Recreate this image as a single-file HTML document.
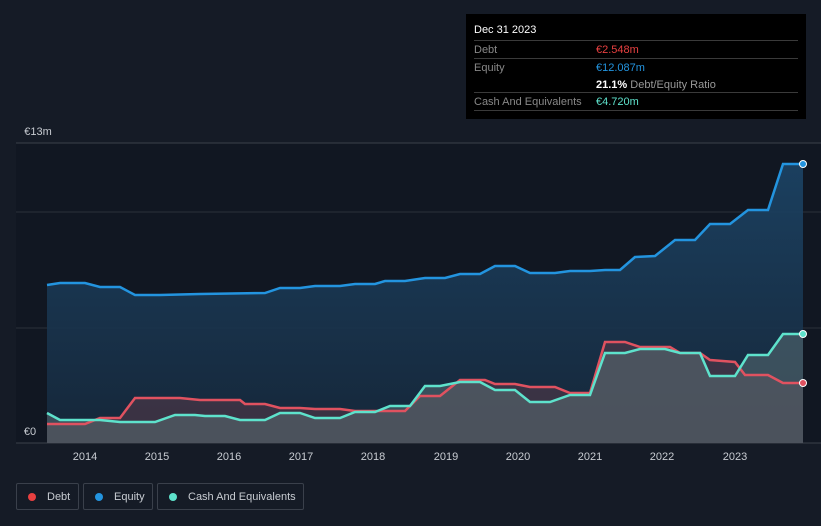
<!DOCTYPE html><html><head><style>
body{margin:0;width:821px;height:526px;background:#151b26;font-family:"Liberation Sans",sans-serif;overflow:hidden;position:relative}
.tt{position:absolute;left:466px;top:14px;width:340px;height:105px;background:#000;color:#fff;font-size:11px}
.row{position:absolute;left:8px;width:324px;border-top:1px solid #3a3a3a;height:18px;line-height:18px}
.lab{color:#888}.v{position:absolute;left:122px}
.leg{position:absolute;top:483px;height:27px;border:1px solid #3a404b;border-radius:2px;color:#c8ccd2;font-size:11px;line-height:27px;box-sizing:border-box}
.dot{display:inline-block;width:8px;height:8px;border-radius:50%;margin:0 11px 0 11px;vertical-align:-1px}
</style></head><body>
<svg width="821" height="526" style="position:absolute;left:0;top:0">
<defs><linearGradient id="g" x1="0" y1="0" x2="0" y2="1"><stop offset="0" stop-color="#1c4466" stop-opacity=".9"/><stop offset="1" stop-color="#16283b" stop-opacity=".9"/></linearGradient></defs>
<rect x="16" y="143" width="805" height="300" fill="#111722"/>
<line x1="16" y1="143" x2="821" y2="143" stroke="#3a404a"/>
<line x1="16" y1="212" x2="821" y2="212" stroke="#2a303a"/>
<line x1="16" y1="328" x2="821" y2="328" stroke="#2a303a"/>
<line x1="16" y1="443" x2="821" y2="443" stroke="#3a404a"/>
<path d="M47,285 L60,283 85,283 100,287 120,287 135,295 160,295 200,294 265,293 280,288 300,288 315,286 340,286 355,284 375,284 385,281 405,281 425,278 445,278 460,274 480,274 495,266 515,266 530,273 555,273 570,271 590,271 605,270 620,270 635,257 655,256 675,240 695,240 710,224 730,224 748,210 768,210 783,164 803,164 L803,443 L47,443Z" fill="url(#g)"/>
<path d="M47,424 L85,424 100,418 120,418 135,398 180,398 200,400 240,400 245,404 265,404 280,408 300,408 315,409 340,409 355,411 405,411 420,396 440,396 460,380 485,380 495,384 515,384 530,387 555,387 570,393 590,393 605,342 625,342 640,347 670,347 680,353 700,353 710,360 735,362 745,375 768,375 783,383 803,383 L803,443 L47,443Z" fill="#5a3a48" fill-opacity=".55"/>
<path d="M47,413 L60,420 100,420 120,422 155,422 175,415 195,415 205,416 225,416 240,420 265,420 280,413 300,413 315,418 340,418 355,412 375,412 390,406 410,406 425,386 440,386 460,382 480,382 495,390 515,390 530,402 550,402 570,395 590,395 605,353 625,353 640,349 665,349 680,353 700,353 710,376 735,376 748,355 768,355 783,334 803,334 L803,443 L47,443Z" fill="#5a6e72" fill-opacity=".55"/>
<path d="M47,285 L60,283 85,283 100,287 120,287 135,295 160,295 200,294 265,293 280,288 300,288 315,286 340,286 355,284 375,284 385,281 405,281 425,278 445,278 460,274 480,274 495,266 515,266 530,273 555,273 570,271 590,271 605,270 620,270 635,257 655,256 675,240 695,240 710,224 730,224 748,210 768,210 783,164 803,164" fill="none" stroke="#2394df" stroke-width="2.5"/>
<path d="M47,424 L85,424 100,418 120,418 135,398 180,398 200,400 240,400 245,404 265,404 280,408 300,408 315,409 340,409 355,411 405,411 420,396 440,396 460,380 485,380 495,384 515,384 530,387 555,387 570,393 590,393 605,342 625,342 640,347 670,347 680,353 700,353 710,360 735,362 745,375 768,375 783,383 803,383" fill="none" stroke="#e05260" stroke-width="2.5"/>
<path d="M47,413 L60,420 100,420 120,422 155,422 175,415 195,415 205,416 225,416 240,420 265,420 280,413 300,413 315,418 340,418 355,412 375,412 390,406 410,406 425,386 440,386 460,382 480,382 495,390 515,390 530,402 550,402 570,395 590,395 605,353 625,353 640,349 665,349 680,353 700,353 710,376 735,376 748,355 768,355 783,334 803,334" fill="none" stroke="#5ee2cc" stroke-width="2.5"/>
<circle cx="803" cy="164" r="3.5" fill="#2394df" stroke="#fff" stroke-width="1"/>
<circle cx="803" cy="334" r="3.5" fill="#5ee2cc" stroke="#fff" stroke-width="1"/>
<circle cx="803" cy="383" r="3.5" fill="#e05260" stroke="#fff" stroke-width="1"/>
<g fill="#c8ccd2" font-size="11" font-family="Liberation Sans" text-anchor="middle">
<text x="85" y="460">2014</text><text x="157" y="460">2015</text><text x="229" y="460">2016</text><text x="301" y="460">2017</text><text x="373" y="460">2018</text><text x="446" y="460">2019</text><text x="518" y="460">2020</text><text x="590" y="460">2021</text><text x="662" y="460">2022</text><text x="735" y="460">2023</text>
<text x="38" y="135">€13m</text><text x="30" y="435">€0</text></g>
</svg>
<div class="tt">
<div style="position:absolute;left:8px;top:10px;font-size:11px">Dec 31 2023</div>
<div class="row lab" style="top:26px"><span>Debt</span><span class="v" style="color:#e84040">€2.548m</span></div>
<div class="row lab" style="top:44px"><span>Equity</span><span class="v" style="color:#2394df">€12.087m</span></div>
<div class="row" style="top:62px;border:none"><span class="v" style="color:#fff"><b>21.1%</b> <span style="color:#999">Debt/Equity Ratio</span></span></div>
<div class="row lab" style="top:78px"><span>Cash And Equivalents</span><span class="v" style="color:#5ee2cc">€4.720m</span></div>
<div class="row" style="top:96px;height:0"></div>
</div>
<div class="leg" style="left:16px;width:63px"><span class="dot" style="background:#e84040"></span>Debt</div>
<div class="leg" style="left:83px;width:70px"><span class="dot" style="background:#2394df"></span>Equity</div>
<div class="leg" style="left:157px;width:147px"><span class="dot" style="background:#5ee2cc"></span>Cash And Equivalents</div>
</body></html>
